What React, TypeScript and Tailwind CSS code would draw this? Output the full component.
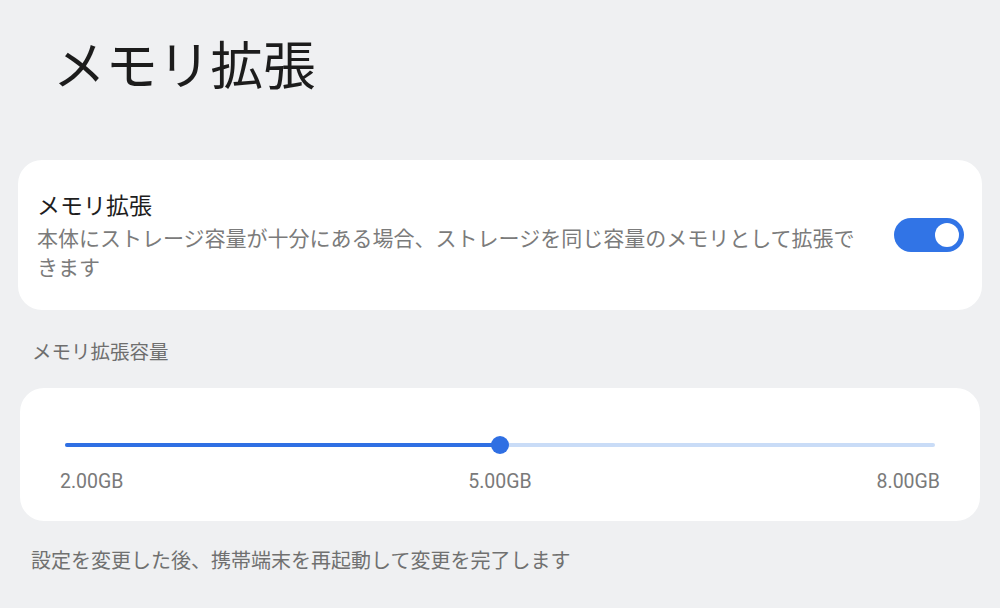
export default function App() {
  const jp = { fontFamily: '"Noto Sans CJK JP", "Noto Sans", sans-serif' };
  const pct = 50;

  return (
    <div className="w-[1000px] h-[608px] overflow-hidden bg-[#eff0f2]" style={jp}>
      <h1 className="pl-[53px] pt-[31px] text-[52.5px] leading-[1.2] font-normal text-[#1c1c1c]">
        メモリ拡張
      </h1>

      <div className="mx-[18px] mt-[66px] h-[150px] rounded-[24px] bg-white flex items-center pl-[19px] pr-[18px]">
        <div className="flex-1 pr-[20px]">
          <div className="text-[23px] leading-[30px] text-[#1e1e1e]">メモリ拡張</div>
          <p className="mt-[4px] text-[21px] leading-[29px] text-[#7b7b7b] w-[830px]">
            本体にストレージ容量が十分にある場合、ストレージを同じ容量のメモリとして拡張できます
          </p>
        </div>
        <div className="w-[70px] h-[34px] rounded-full bg-[#3174e6] flex items-center justify-end pr-[5px] shrink-0">
          <div className="w-[24px] h-[24px] rounded-full bg-white" />
        </div>
      </div>

      <div className="pl-[32px] mt-[28px] text-[19.5px] leading-[26px] text-[#6e6e6e]">メモリ拡張容量</div>

      <div className="mx-[20px] mt-[24px] h-[133px] rounded-[24px] bg-white px-[40px] pt-[48px]">
        <div className="relative mx-[5px] h-[18px] flex items-center">
          <div className="h-[4px] w-full rounded-full bg-[#c9dcf7]" />
          <div className="absolute left-0 h-[4px] rounded-full bg-[#2f6fe3]" style={{ width: `${pct}%` }} />
          <div
            className="absolute w-[18px] h-[18px] rounded-full bg-[#2f6fe3] -translate-x-1/2"
            style={{ left: `${pct}%` }}
          />
        </div>
        <div
          className="mt-[16px] flex justify-between text-[19.5px] leading-[24px] text-[#7a7a7a]"
          style={{ fontFamily: 'Roboto, "Noto Sans", sans-serif' }}
        >
          <span>2.00GB</span>
          <span>5.00GB</span>
          <span>8.00GB</span>
        </div>
      </div>

      <p className="pl-[31px] mt-[26px] text-[20px] leading-[26px] text-[#707070]">
        設定を変更した後、携帯端末を再起動して変更を完了します
      </p>
    </div>
  );
}
